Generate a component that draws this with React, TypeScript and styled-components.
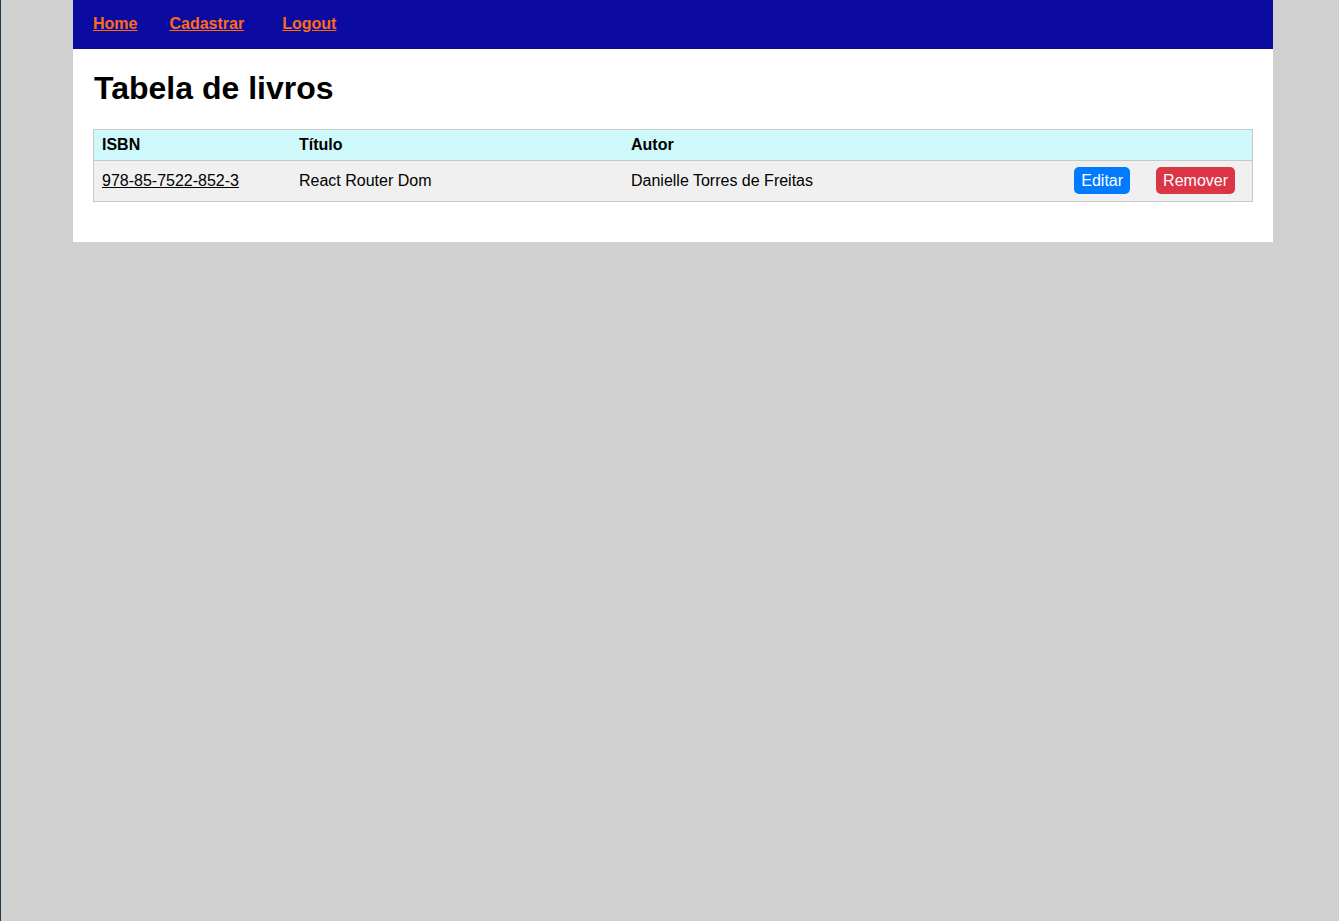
import styled, { createGlobalStyle } from 'styled-components';

const GlobalStyle = createGlobalStyle`
  html, body {
    margin: 0;
    padding: 0;
    background: #d0d0d0;
    font-family: 'Liberation Sans', Arial, sans-serif;
  }
  body {
    border-left: 1px solid #1e3a4c;
    min-height: 100vh;
    box-sizing: border-box;
  }
`;

const Page = styled.div`
  width: 1200px;
  margin-left: 72px;
  background: #ffffff;
`;

const Nav = styled.nav`
  display: flex;
  align-items: center;
  height: 49px;
  padding: 0 20px 2px;
  box-sizing: border-box;
  background: #0b0ba2;
`;

const NavLink = styled.a<{ $gap?: number }>`
  margin-right: ${({ $gap }) => $gap ?? 32}px;
  color: #ff6a13;
  font-size: 16px;
  font-weight: 700;
  text-decoration: underline;
  cursor: pointer;
`;

const Content = styled.main`
  padding: 20px 20px 40px;
`;

const Title = styled.h1`
  margin: 1px 0 22px 1px;
  font-size: 32px;
  line-height: 37px;
  font-weight: 700;
  color: #000;
`;

const Table = styled.table`
  width: 100%;
  table-layout: fixed;
  border-collapse: collapse;
  border: 1px solid #c8c8c8;
  font-size: 16px;
  color: #000;
`;

const HeadRow = styled.tr`
  background: #cff8fa;
  border-bottom: 1px solid #c8c8c8;
`;

const Th = styled.th<{ $width?: number }>`
  width: ${({ $width }) => ($width ? `${$width}px` : 'auto')};
  height: 30px;
  padding: 0 8px;
  text-align: left;
  font-weight: 700;
`;

const BodyRow = styled.tr`
  background: #f0f0f0;
`;

const Td = styled.td`
  height: 40px;
  padding: 0 8px;
`;

const IsbnLink = styled.a`
  color: #000;
  text-decoration: underline;
`;

const Actions = styled.td`
  padding: 0 17px 1px 0;
  text-align: right;
  white-space: nowrap;
`;

const Button = styled.button<{ $variant: 'edit' | 'remove' }>`
  margin-left: 26px;
  padding: 4px 7px;
  border: none;
  border-radius: 5px;
  background: ${({ $variant }) => ($variant === 'edit' ? '#007bff' : '#dc3545')};
  color: #fff;
  font-family: 'Liberation Sans', Arial, sans-serif;
  font-size: 16px;
  line-height: 19px;
  cursor: pointer;
`;

const books = [
  {
    isbn: '978-85-7522-852-3',
    titulo: 'React Router Dom',
    autor: 'Danielle Torres de Freitas',
  },
];

export default function App() {
  return (
    <>
      <GlobalStyle />
      <Page>
        <Nav>
          <NavLink>Home</NavLink>
          <NavLink $gap={38}>Cadastrar</NavLink>
          <NavLink>Logout</NavLink>
        </Nav>
        <Content>
          <Title>Tabela de livros</Title>
          <Table>
            <thead>
              <HeadRow>
                <Th $width={181}>ISBN</Th>
                <Th $width={316}>Título</Th>
                <Th>Autor</Th>
                <Th $width={210} />
              </HeadRow>
            </thead>
            <tbody>
              {books.map((book) => (
                <BodyRow key={book.isbn}>
                  <Td>
                    <IsbnLink>{book.isbn}</IsbnLink>
                  </Td>
                  <Td>{book.titulo}</Td>
                  <Td>{book.autor}</Td>
                  <Actions>
                    <Button $variant="edit">Editar</Button>
                    <Button $variant="remove">Remover</Button>
                  </Actions>
                </BodyRow>
              ))}
            </tbody>
          </Table>
        </Content>
      </Page>
    </>
  );
}
